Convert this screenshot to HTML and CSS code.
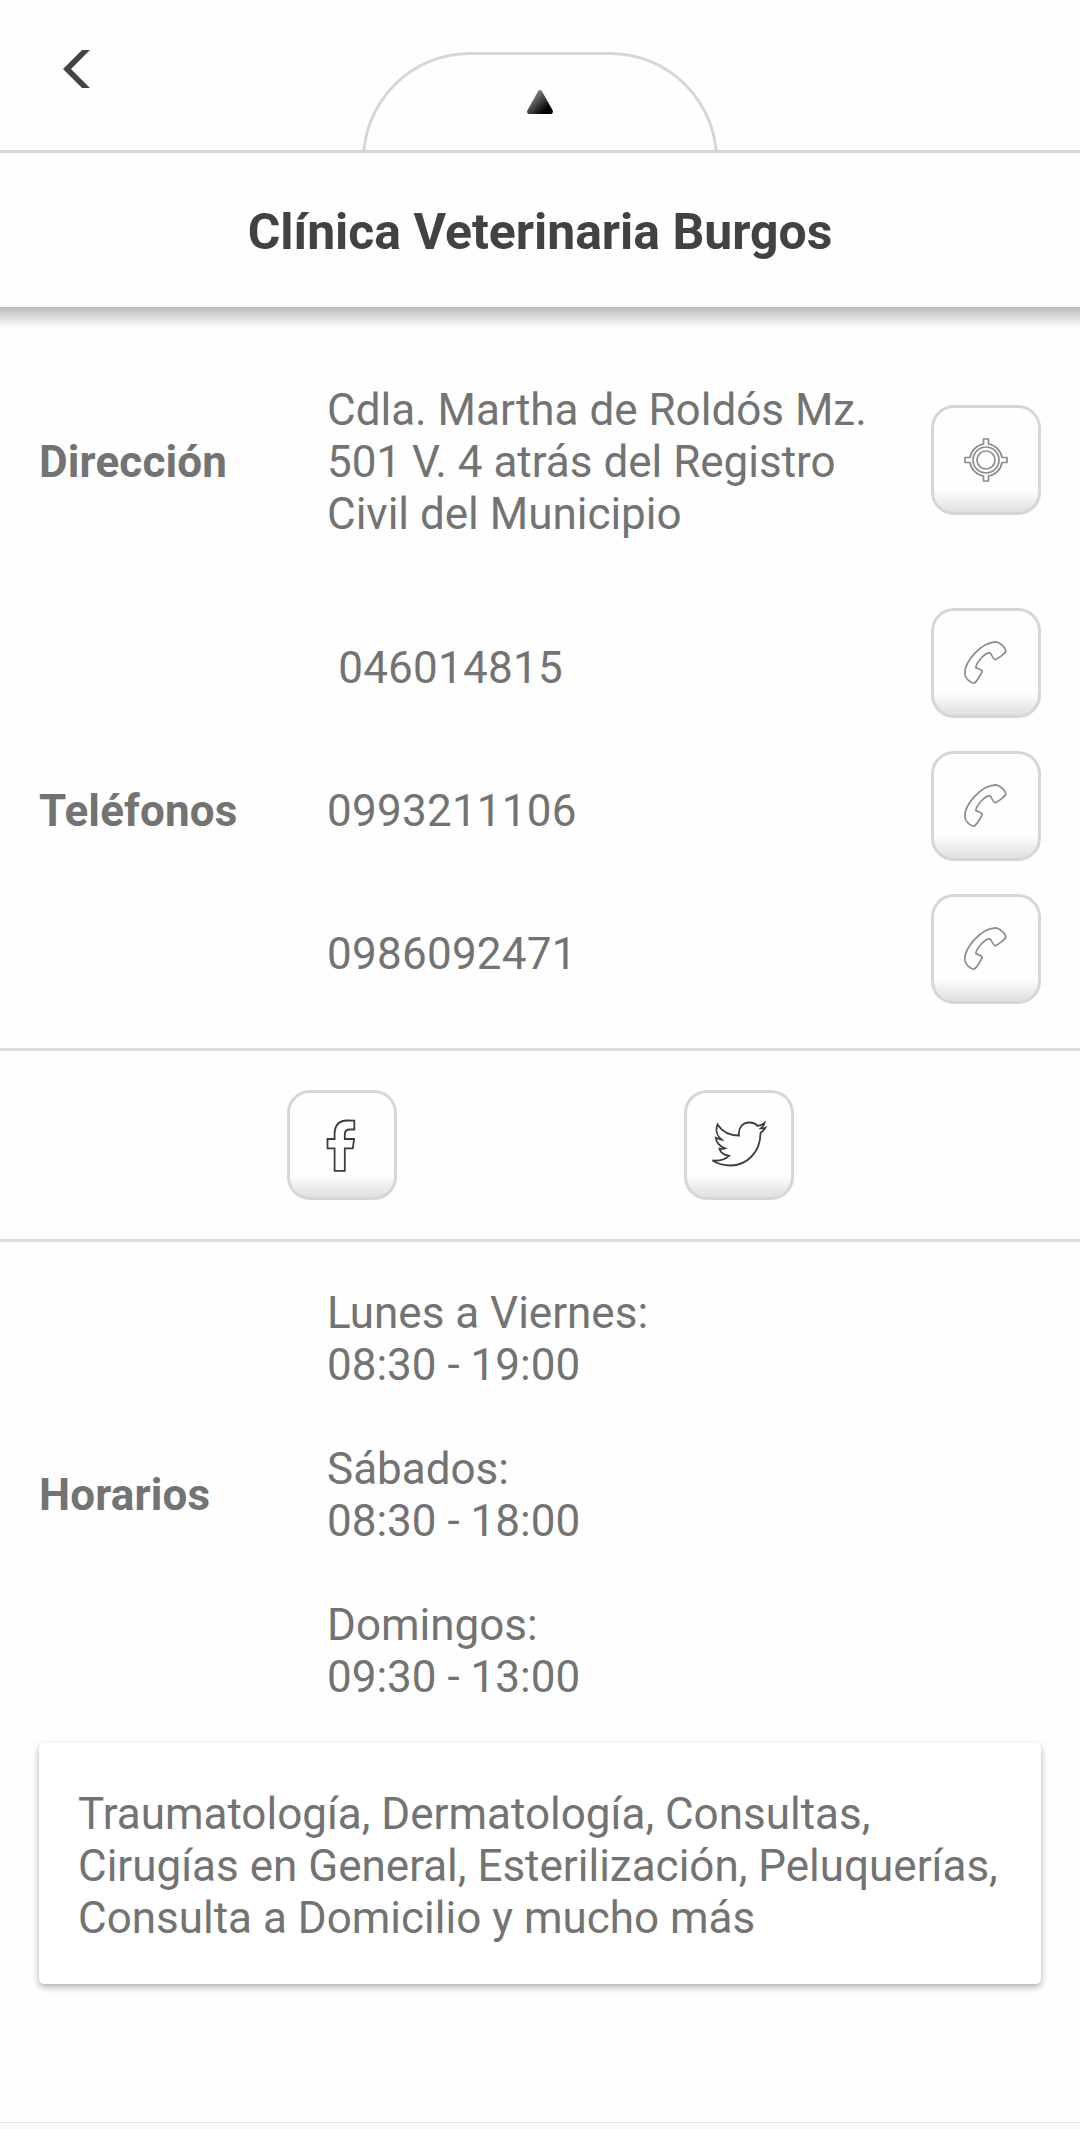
FILE: index.html
```html
<!DOCTYPE html>
<html lang="es">

	<head>
		<meta charset="UTF-8">
		<meta name="viewport" content="width=device-width, initial-scale=1.0">
		<title>Clínica Veterinaria Burgos</title>
		<link rel="stylesheet" href="styles.css">
	</head>

	<body>

		<!-- formas de los iconos que se repiten -->
		<svg width="0" height="0" class="defs">
			<symbol id="phone" viewBox="0 0 60 60">
				<path d="M39.500 8.800 C43 8.800 49.800 14.500 49.800 18.500 C48.500 21 42 25.500 39.200 26.800 C36.500 26.500 36.500 21.500 33.800 19.800 C29 19.500 20.500 29 19.800 34.500 C21 35.500 25.500 36 26.200 38.300 C25.500 41 20.800 48 18.500 50 C14.500 50.500 8.800 45 8.800 40.500 C8.500 29 24.500 9.500 39.500 8.800 Z" />
			</symbol>
		</svg>

		<!-- cabecera -->
		<div class="header">
			<a href="#" class="back">
				<svg width="27" height="38" viewBox="0 0 27 38">
					<path d="M0 19 L19 0 H27 L8 19 L27 38 H19 Z" fill="#444" />
				</svg>
			</a>
			<div class="tab">
				<svg width="26" height="24" viewBox="0 0 26 24">
					<defs>
						<linearGradient id="shade" x1="0.25" y1="0.3" x2="0.75" y2="0.8">
							<stop offset="0" stop-color="#777" />
							<stop offset="1" stop-color="#000" />
						</linearGradient>
					</defs>
					<path d="M11.200 1 Q13 -1 14.800 1 L25.700 20.500 Q26.500 24 24 24 H2 Q-0.500 24 0.300 20.500 Z" fill="url(#shade)" />
				</svg>
			</div>
		</div>
		<h1 class="title">Clínica Veterinaria Burgos</h1>

		<!-- datos de contacto -->
		<div class="row address">
			<div class="label">Dirección</div>
			<div class="text">Cdla. Martha de Roldós Mz.<br>501 V. 4 atrás del Registro<br>Civil del Municipio</div>
			<a href="#" class="button">
				<svg width="44" height="44" viewBox="0 0 44 44">
					<path d="M19.500 6 V1 H24.500 V6 A16.200 16.200 0 0 1 38 19.500 H43 V24.500 H38 A16.200 16.200 0 0 1 24.500 38 V43 H19.500 V38 A16.200 16.200 0 0 1 6 24.500 H1 V19.500 H6 A16.200 16.200 0 0 1 19.500 6 Z" />
					<circle cx="22" cy="22" r="13" />
					<circle cx="22" cy="22" r="9" />
				</svg>
			</a>
		</div>

		<div class="row phones">
			<div class="label">Teléfonos</div>
			<div class="list">
				<div class="phone">
					<span class="number">&nbsp;046014815</span>
					<a href="#" class="button"><svg width="60" height="60"><use href="#phone" /></svg></a>
				</div>
				<div class="phone">
					<span class="number">0993211106</span>
					<a href="#" class="button"><svg width="60" height="60"><use href="#phone" /></svg></a>
				</div>
				<div class="phone">
					<span class="number">0986092471</span>
					<a href="#" class="button"><svg width="60" height="60"><use href="#phone" /></svg></a>
				</div>
			</div>
		</div>

		<!-- redes sociales -->
		<div class="social">
			<a href="#" class="button dark">
				<svg width="60" height="60" viewBox="0 0 60 60">
					<path d="M42.300 5.700 V14.500 H37.800 Q32.800 14.500 32.800 19.500 V24 H42.100 L40.800 33.300 H32.800 V55.800 H22.600 V33.300 H15.500 V24 H22.600 V18 Q23.300 5.500 35.300 5.500 Z" />
				</svg>
			</a>
			<a href="#" class="button dark">
				<svg width="60" height="60" viewBox="0 0 60 60">
					<path d="M8.500 9.500 C13 16.500 21 20.500 30 20.500 C29 12.500 34 7.500 40 7.500 C44 7.500 47 9 48.500 10.800 C51 10.800 53 10 55.500 8 C54.800 10.500 53.500 12.300 52 13.300 C53.700 13.500 55 13.300 56.300 12.800 C55 15 53.500 16.500 51.500 18 C51.500 38 37 50.500 21.500 50.500 C15 50.500 9 49 3.500 45.500 C10 46 16 44.500 20 40.800 C15 40 11.500 37.500 10.500 33.700 C12.500 34 14.500 33.900 16 33.300 C10.500 31.500 7 27 6.800 22.800 C8.500 23.700 10.500 24.200 12.500 24.500 C7.500 20.500 6.500 14.500 8.500 9.500 Z" />
				</svg>
			</a>
		</div>

		<!-- horarios -->
		<div class="row schedule">
			<div class="label">Horarios</div>
			<div class="text">
				<p>Lunes a Viernes:<br>08:30 - 19:00</p>
				<p>Sábados:<br>08:30 - 18:00</p>
				<p>Domingos:<br>09:30 - 13:00</p>
			</div>
		</div>

		<div class="card">Traumatología, Dermatología, Consultas,<br>Cirugías en General, Esterilización, Peluquerías,<br>Consulta a Domicilio y mucho más</div>

		<div class="footer"></div>

	</body>

</html>
```

FILE: styles.css
```css
* {
	box-sizing: border-box;
}

body {
	display: flex;
	flex-direction: column;
	height: 2129px;
	margin: 0;
	background-color: #fefefe;
	color: #737373;
	font-family: Roboto, sans-serif;
	font-size: 44px;
	line-height: 52px;
	white-space: nowrap;
}

.defs {
	position: absolute;
}

/* cabecera */
.header {
	display: grid;
	grid-template-columns: 1fr 356px 1fr;
	height: 153px;
	border-bottom: 3px solid #d6d6d6;
	overflow: hidden;
}

.back {
	padding: 50px 0 0 63px;
	line-height: 0;
}

.tab {
	height: 130px;
	margin-top: 52px;
	padding-top: 35px;
	border: 3px solid #d6d6d6;
	border-radius: 108px 108px 0 0;
	line-height: 0;
	text-align: center;
}

.title {
	height: 154px;
	margin: 0;
	color: #424242;
	font-size: 49.9px;
	font-weight: bold;
	line-height: 158px;
	text-align: center;
}

/* sombra debajo del título */
.title::after {
	content: "";
	display: block;
	height: 21px;
	margin-top: -4px;
	background: linear-gradient(#b9b9b9, #d6d6d6 40%, #fefefe);
}

/* filas con etiqueta a la izquierda */
.row {
	display: flex;
	align-items: center;
	padding: 0 39px;
}

.label {
	width: 288px;
	font-weight: bold;
	letter-spacing: 0.15px;
}

.text {
	flex: 1;
}

.address {
	margin-top: 77px;
}

.address .button {
	margin-bottom: 5px;
}

.phones {
	margin-top: 68px;
}

.phones .label {
	padding-top: 9px;
}

.list {
	flex: 1;
	display: flex;
	flex-direction: column;
	gap: 33px;
}

.phone {
	display: flex;
	justify-content: space-between;
	align-items: center;
}

.number {
	padding-top: 9px;
	letter-spacing: 0.25px;
}

.button {
	display: flex;
	justify-content: center;
	align-items: center;
	width: 110px;
	height: 110px;
	border: 3px solid #d6d6d6;
	border-radius: 23px;
	background: linear-gradient(#fefefe 78%, #e0e0e0);
}

.button svg {
	fill: none;
	stroke: #8c8c8c;
	stroke-width: 1.7;
	stroke-linejoin: round;
}

.dark svg {
	stroke: #3c3c3c;
	stroke-width: 1.8;
	stroke-linejoin: miter;
}

/* redes sociales */
.social {
	display: flex;
	justify-content: center;
	align-items: center;
	gap: 287px;
	height: 194px;
	margin-top: 44px;
	border-top: 3px solid #dcdcdc;
	border-bottom: 3px solid #dcdcdc;
}

.schedule {
	margin-top: 45px;
}

.schedule p {
	margin: 0 0 52px;
}

.schedule p:last-child {
	margin-bottom: 0;
}

.card {
	height: 241px;
	margin: 40px 39px 0;
	padding: 45px 39px;
	border-radius: 5px;
	background-color: #fff;
	box-shadow: 0 3px 7px rgba(0, 0, 0, 0.32);
}

.footer {
	height: 7px;
	margin-top: auto;
	border-top: 1px solid #e0e0e0;
	background-color: #fafafa;
}
```
